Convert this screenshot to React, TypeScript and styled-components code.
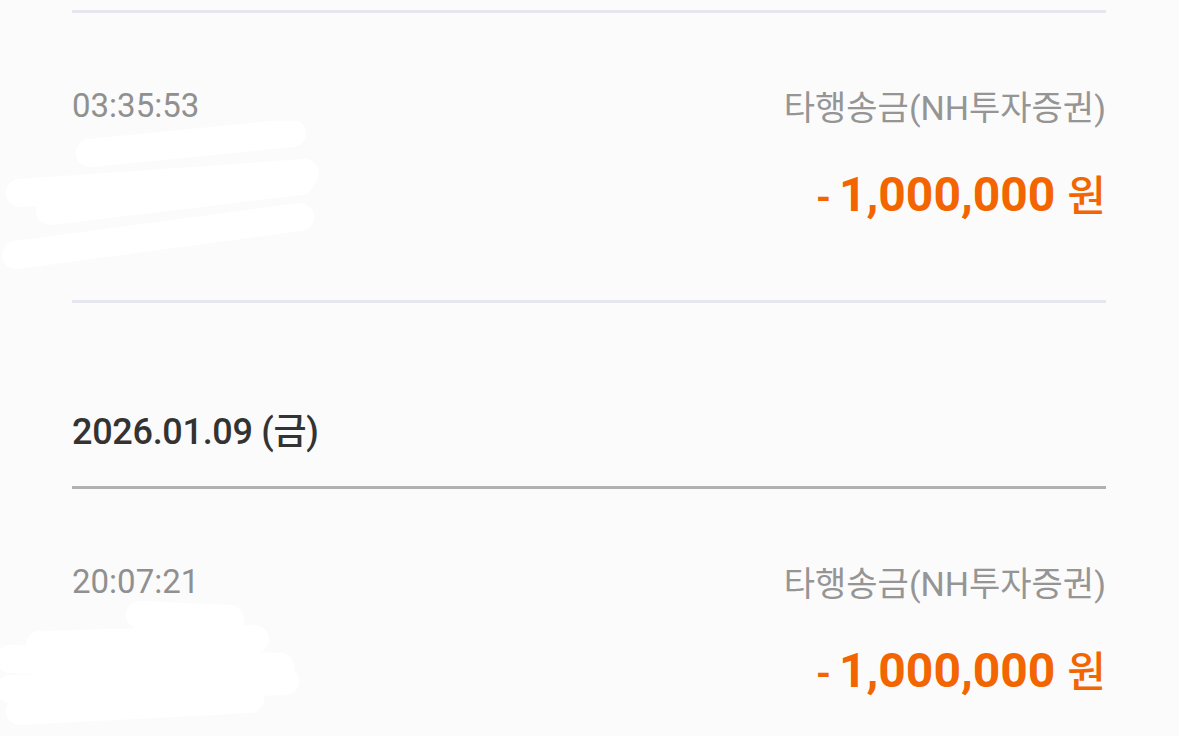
import React from "react";
import styled, { createGlobalStyle } from "styled-components";

const GlobalStyle = createGlobalStyle`
	html, body {
		margin: 0;
		padding: 0;
		background: #fbfbfb;
	}
	body {
		font-family: Roboto, "Noto Sans CJK KR", "Noto Sans", sans-serif;
		overflow: hidden;
	}
`;

interface ITx {
	time: string;
	label: string;
	amount: string;
	scribble: string[];
}

interface IDay {
	date?: string;
	items: ITx[];
}

const days: IDay[] = [
	{
		items: [
			{
				time: "03:35:53",
				label: "타행송금(NH투자증권)",
				amount: "1,000,000",
				scribble: [
					"M 90 32 L 292 12",
					"M 20 72 L 305 52",
					"M 50 90 L 300 60",
					"M 16 134 L 300 96",
				],
			},
		],
	},
	{
		date: "2026.01.09 (금)",
		items: [
			{
				time: "20:07:21",
				label: "타행송금(NH투자증권)",
				amount: "1,000,000",
				scribble: [
					"M 140 18 L 230 22",
					"M 40 48 L 255 42",
					"M 10 62 L 280 70",
					"M 10 92 L 285 84",
					"M 20 114 L 250 102",
				],
			},
		],
	},
];

const Page = styled.div`
	padding: 10px 73px 0 72px;
`;

const Row = styled.div`
	position: relative;
	border-top: 3px solid #e6e6ee;
	padding: 72px 0 77px;
`;

const DateHeader = styled.div`
	border-top: 3px solid #e6e6ee;
	border-bottom: 3px solid #b1b1b1;
	padding: 109px 0 34px;
	font-size: 36px;
	line-height: 40px;
	font-weight: 500;
	color: #333333;
	letter-spacing: -0.3px;
`;

const DayGroup = styled.div`
	& > ${DateHeader} + ${Row} {
		border-top: none;
	}
`;

const InfoLine = styled.div`
	display: flex;
	justify-content: space-between;
	align-items: center;
	height: 40px;
	font-size: 33px;
	color: #909090;
`;

const Time = styled.span`
	letter-spacing: 0;
`;

const Label = styled.span`
	font-size: 34px;
	color: #959595;
	letter-spacing: 0;
`;

const AmountLine = styled.div`
	display: flex;
	justify-content: flex-end;
	align-items: baseline;
	margin-top: 42px;
	height: 56px;
	line-height: 56px;
	color: #f26500;
	font-weight: 700;
`;

const Minus = styled.span`
	font-size: 38px;
	margin-right: 8px;
`;

const Value = styled.span`
	font-size: 48px;
	letter-spacing: 0;
`;

const Unit = styled.span`
	font-size: 42px;
	font-weight: 500;
	margin-left: 12px;
`;

const Scribble = styled.svg`
	position: absolute;
	left: -72px;
	top: 108px;
	pointer-events: none;
`;

const Redaction = (props: { paths: string[] }) => (
	<Scribble width="340" height="160" viewBox="0 0 340 160">
		{props.paths.map((d, i) => (
			<path
				key={i}
				d={d}
				stroke="#ffffff"
				strokeWidth={28}
				strokeLinecap="round"
				fill="none"
			/>
		))}
	</Scribble>
);

const Transaction = (props: { tx: ITx }) => (
	<Row>
		<InfoLine>
			<Time>{props.tx.time}</Time>
			<Label>{props.tx.label}</Label>
		</InfoLine>
		<Redaction paths={props.tx.scribble} />
		<AmountLine>
			<Minus>-</Minus>
			<Value>{props.tx.amount}</Value>
			<Unit>원</Unit>
		</AmountLine>
	</Row>
);

const App = () => {
	return (
		<>
			<GlobalStyle />
			<Page>
				{days.map((day, i) => (
					<DayGroup key={i}>
						{day.date && <DateHeader>{day.date}</DateHeader>}
						{day.items.map((tx, j) => (
							<Transaction key={j} tx={tx} />
						))}
					</DayGroup>
				))}
			</Page>
		</>
	);
};

export default App;
